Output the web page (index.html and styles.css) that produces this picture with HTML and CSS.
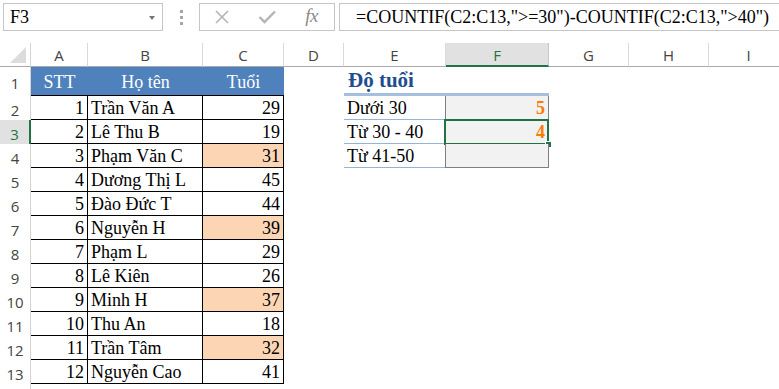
FILE: index.html
```html
<!DOCTYPE html>
<html lang="vi">
<head>
<meta charset="utf-8">
<title>Excel - COUNTIF</title>
<link rel="stylesheet" href="styles.css">
</head>
<body>
<div class="app">
  <div class="topbar">
    <div class="namebox"><span>F3</span><span class="arrow"></span></div>
    <div class="dots"><i></i><i></i><i></i></div>
    <div class="fxbox">
      <span class="slot"><svg width="16" height="16" viewBox="0 0 16 16"><path d="M2 2 L14 14 M14 2 L2 14" stroke="#b4b4b4" stroke-width="1.6" fill="none"/></svg></span>
      <span class="slot"><svg width="18" height="14" viewBox="0 0 18 14"><path d="M1.5 7 L6.5 12 L17 1.5" stroke="#b4b4b4" stroke-width="2.4" fill="none"/></svg></span>
      <span class="slot fx">fx</span>
    </div>
    <div class="formula">=COUNTIF(C2:C13,"&gt;=30")-COUNTIF(C2:C13,"&gt;40")</div>
  </div>

  <div class="row hdrrow">
    <div class="corner"><span class="tri"></span></div>
    <div class="ch">A</div><div class="ch">B</div><div class="ch">C</div><div class="ch">D</div>
    <div class="ch">E</div><div class="ch sel">F</div><div class="ch">G</div><div class="ch">H</div><div class="ch">I</div>
  </div>

  <div class="row r1">
    <div class="rh">1</div>
    <div class="c hd">STT</div><div class="c hd">Họ tên</div><div class="c hd">Tuổi</div>
    <div class="c"></div>
    <div class="c title">Độ tuổi</div><div class="c title"></div>
  </div>

  <div class="row">
    <div class="rh">2</div>
    <div class="c t num">1</div><div class="c t">Trần Văn A</div><div class="c t num">29</div>
    <div class="c"></div>
    <div class="c lbl">Dưới 30</div><div class="c calc">5</div>
  </div>
  <div class="row">
    <div class="rh sel">3</div>
    <div class="c t num">2</div><div class="c t">Lê Thu B</div><div class="c t num">19</div>
    <div class="c"></div>
    <div class="c lbl">Từ 30 - 40</div><div class="c calc active">4<span class="selbox"></span><span class="handle"></span></div>
  </div>
  <div class="row">
    <div class="rh">4</div>
    <div class="c t num">3</div><div class="c t">Phạm Văn C</div><div class="c t num hl">31</div>
    <div class="c"></div>
    <div class="c lbl">Từ 41-50</div><div class="c calc"></div>
  </div>
  <div class="row">
    <div class="rh">5</div>
    <div class="c t num">4</div><div class="c t">Dương Thị L</div><div class="c t num">45</div>
  </div>
  <div class="row">
    <div class="rh">6</div>
    <div class="c t num">5</div><div class="c t">Đào Đức T</div><div class="c t num">44</div>
  </div>
  <div class="row">
    <div class="rh">7</div>
    <div class="c t num">6</div><div class="c t">Nguyễn H</div><div class="c t num hl">39</div>
  </div>
  <div class="row">
    <div class="rh">8</div>
    <div class="c t num">7</div><div class="c t">Phạm L</div><div class="c t num">29</div>
  </div>
  <div class="row">
    <div class="rh">9</div>
    <div class="c t num">8</div><div class="c t">Lê Kiên</div><div class="c t num">26</div>
  </div>
  <div class="row">
    <div class="rh">10</div>
    <div class="c t num">9</div><div class="c t">Minh H</div><div class="c t num hl">37</div>
  </div>
  <div class="row">
    <div class="rh">11</div>
    <div class="c t num">10</div><div class="c t">Thu An</div><div class="c t num">18</div>
  </div>
  <div class="row">
    <div class="rh">12</div>
    <div class="c t num">11</div><div class="c t">Trần Tâm</div><div class="c t num hl">32</div>
  </div>
  <div class="row">
    <div class="rh">13</div>
    <div class="c t num">12</div><div class="c t">Nguyễn Cao</div><div class="c t num">41</div>
  </div>
  <div class="row">
    <div class="rh"></div>
  </div>
</div>
</body>
</html>
```

FILE: styles.css
```css
html, body {
  margin: 0;
  padding: 0;
  background: #ffffff;
  overflow: hidden;
}
.app {
  width: 779px;
  height: 389px;
  overflow: hidden;
  font-family: "Liberation Serif", "Times New Roman", serif;
  color: #000;
}
/* ---------- top bar ---------- */
.topbar {
  height: 43px;
  box-sizing: border-box;
  padding-top: 3px;
  display: flex;
  align-items: flex-start;
}
.namebox {
  margin-left: 3px;
  width: 160px;
  height: 28px;
  box-sizing: border-box;
  border: 1px solid #c6c6c6;
  display: flex;
  align-items: center;
  justify-content: space-between;
  padding: 0 7px 0 6px;
  font-size: 18px;
  line-height: 20px;
}
.arrow {
  width: 0;
  height: 0;
  border-left: 3.5px solid transparent;
  border-right: 3.5px solid transparent;
  border-top: 4px solid #777;
  margin-top: 2px;
}
.dots {
  margin-left: 17px;
  margin-top: 7px;
  width: 3px;
  display: flex;
  flex-direction: column;
  gap: 3px;
}
.dots i {
  display: block;
  width: 3px;
  height: 3px;
  background: #a6a6a6;
}
.fxbox {
  margin-left: 16px;
  width: 136px;
  height: 28px;
  box-sizing: border-box;
  border: 1px solid #c6c6c6;
  display: flex;
}
.slot {
  flex: 1;
  display: flex;
  align-items: center;
  justify-content: center;
}
.fx {
  font-family: "Liberation Serif", serif;
  font-style: italic;
  font-size: 19px;
  color: #8a8a8a;
  letter-spacing: -0.5px;
  padding-bottom: 2px;
}
.formula {
  margin-left: 4px;
  flex: 1;
  height: 28px;
  box-sizing: border-box;
  border: 1px solid #c6c6c6;
  border-right: none;
  padding-left: 16px;
  font-size: 18px;
  line-height: 26px;
  white-space: nowrap;
  overflow: hidden;
}
/* ---------- grid rows ---------- */
.row {
  display: grid;
  grid-template-columns: 31px 57px 115px 81px 60px 102px 103px 80px 80px 80px;
  height: 24px;
}
.row.r1 { height: 29px; }
.hdrrow { height: 24px; }
.corner {
  position: relative;
  box-sizing: border-box;
  border-right: 1px solid #d4d4d4;
  border-bottom: 1px solid #ababab;
}
.tri {
  position: absolute;
  right: 4px;
  bottom: 3px;
  width: 0;
  height: 0;
  border-left: 16px solid transparent;
  border-bottom: 16px solid #dcdcdc;
}
.ch {
  box-sizing: border-box;
  border-right: 1px solid #d9d9d9;
  border-bottom: 1px solid #ababab;
  font-family: "Open Sans", "Noto Sans", sans-serif;
  font-size: 15px;
  color: #444;
  display: flex;
  align-items: center;
  justify-content: center;
  padding-top: 1px;
}
.ch.sel {
  background: #e1e1e1;
  color: #217346;
  border-bottom: 2px solid #217346;
  border-right-color: #c6c6c6;
}
.rh {
  box-sizing: border-box;
  border-right: 1px solid #d4d4d4;
  font-family: "Open Sans", "Noto Sans", sans-serif;
  font-size: 15px;
  color: #444;
  display: flex;
  align-items: center;
  justify-content: center;
  padding-top: 3px;
}
.rh.sel {
  background: #e1e1e1;
  color: #217346;
  border-right: 2px solid #217346;
}
/* ---------- cells ---------- */
.c {
  box-sizing: border-box;
  font-size: 18px;
  display: flex;
  align-items: flex-end;
  padding: 0 3px;
  white-space: nowrap;
  position: relative;
}
.c.t {
  border-right: 1px solid #000;
  border-bottom: 1px solid #000;
}
.c.num { justify-content: flex-end; }
.c.hl { background: #fcd5b4; }
.c.hd {
  background: #4f81bd;
  color: #fff;
  justify-content: center;
  align-items: center;
  padding-top: 3px;
  border-bottom: 1px solid #000;
}
.c.title {
  border-bottom: 3px solid #a7bfde;
  font-weight: bold;
  font-size: 21px;
  color: #1f4e8f;
  padding-left: 4px;
  padding-bottom: 0;
}
.c.lbl {
  border-bottom: 1px solid #95b3d7;
}
.c.calc {
  margin-left: -1px;
  background: #f2f2f2;
  border-left: 1px solid #7f7f7f;
  border-right: 1px solid #7f7f7f;
  border-bottom: 1px solid #7f7f7f;
  color: #fa7d00;
  font-weight: bold;
  justify-content: flex-end;
}
.selbox {
  position: absolute;
  left: -2px;
  top: -1px;
  width: 105px;
  height: 26px;
  box-sizing: border-box;
  border: 2px solid #217346;
}
.handle {
  position: absolute;
  left: 100px;
  top: 22px;
  width: 5px;
  height: 5px;
  background: #217346;
  box-shadow: 0 0 0 1px #ffffff;
}
```
